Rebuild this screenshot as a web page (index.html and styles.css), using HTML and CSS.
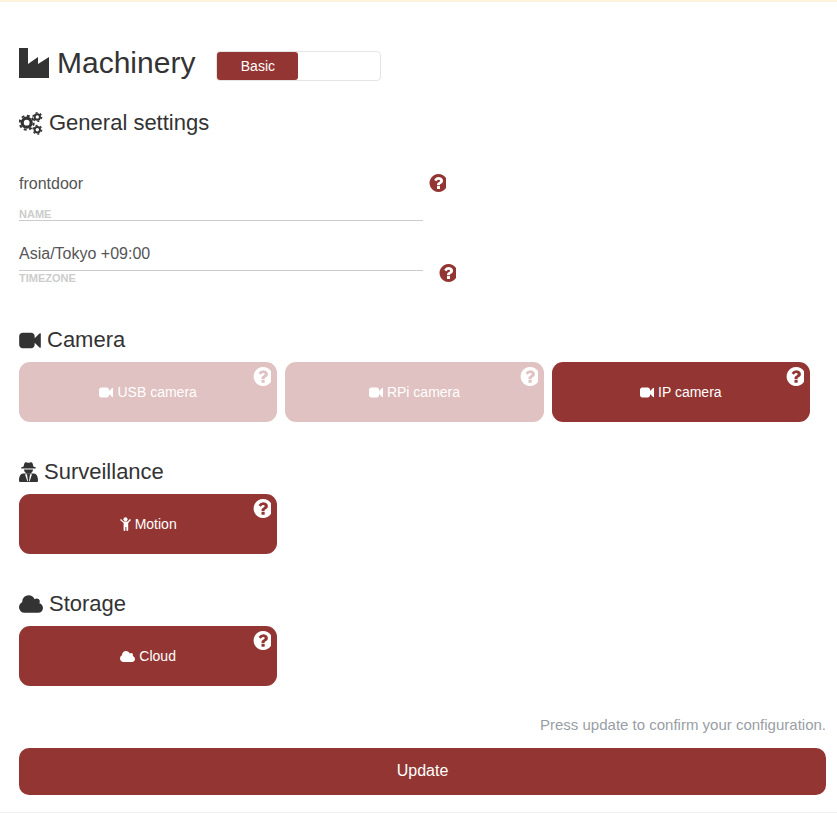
FILE: index.html
```html
<!DOCTYPE html>
<html lang="en">
<head>
    <meta charset="UTF-8">
    <meta name="viewport" content="width=device-width, initial-scale=1.0">
    <title>Machinery</title>
    <link rel="stylesheet" href="styles.css">
</head>
<body>
    <svg class="sprites" width="0" height="0" aria-hidden="true">
        <symbol id="i-help" viewBox="0 0 1536 1536">
            <path transform="translate(0 -128)" d="M1024 1376v-192q0-14-9-23t-23-9h-192q-14 0-23 9t-9 23v192q0 14 9 23t23 9h192q14 0 23-9t9-23zm256-672q0-88-55.5-163t-138.5-116-170-41q-243 0-371 213-15 24 8 42l132 100q7 6 19 6 16 0 25-12 53-68 86-92 34-24 86-24 48 0 85.5 26t37.5 59q0 38-20 61t-68 45q-63 28-115.5 86.5t-52.5 125.5v36q0 14 9 23t23 9h192q14 0 23-9t9-23q0-19 21.5-49.5t54.5-49.5q32-18 49-28.5t46-35 44.5-48 28-60.5 12.5-81zm384 192q0 209-103 385.5t-279.5 279.5-385.5 103-385.5-103-279.5-279.5-103-385.5 103-385.5 279.5-279.5 385.5-103 385.5 103 279.5 279.5 103 385.5z"/>
        </symbol>
        <symbol id="i-video" viewBox="0 192 1792 1408">
            <path d="M1792 352v1088q0 42-39 59-13 5-25 5-27 0-45-19l-403-403v166q0 119-84.5 203.5t-203.5 84.5h-704q-119 0-203.5-84.5t-84.5-203.5v-704q0-119 84.5-203.5t203.5-84.5h704q119 0 203.5 84.5t84.5 203.5v165l403-402q18-19 45-19 12 0 25 5 39 17 39 59z"/>
        </symbol>
        <symbol id="i-cloud" viewBox="0 128 1920 1408">
            <path d="M1920 1152q0 159-112.5 271.5t-271.5 112.5h-1088q-185 0-316.5-131.5t-131.5-316.5q0-132 71-241.5t187-163.5q-2-28-2-43 0-212 150-362t362-150q158 0 286.5 88t187.5 230q70-62 166-62 106 0 181 75t75 181q0 75-41 138 129 30 213 134.5t84 239.5z"/>
        </symbol>
        <symbol id="i-child" viewBox="0 0 11 14">
            <circle cx="5.500" cy="2.200" r="2"/>
            <path d="M0 3l1-1 2.500 2.500h4L10 2l1 1-2.800 3v7a.9.9 0 0 1-1.800 0V10h-1v3a.9.9 0 0 1-1.800 0V6z"/>
        </symbol>
        <symbol id="i-spy" viewBox="0 0 19 20">
            <path d="M6.500.3c.8 0 2 .5 3 .5s2.200-.5 3-.5c1 0 1.600 2.700 1.900 4.200l2.600 1-.5 1H2.500l-.5-1 2.600-1C4.900 3 5.500.3 6.500.3z"/>
            <path d="M5 7.500h9c0 2.400-2 4.300-4.500 4.300S5 9.900 5 7.500z"/>
            <path fill-rule="evenodd" d="M4 11.500h11c2.500 0 4 3.200 4 7 0 1-.5 1.500-1.500 1.500h-16C.5 20 0 19.500 0 18.500c0-3.800 1.500-7 4-7zM6 12.200l2.300 7h.7L8 12.200zM11 12.200l-1 7h.700l2.300-7h-2z"/>
        </symbol>
    </svg>

    <main class="page">
        <div class="title-row">
            <h1>
                <svg class="icon-factory" viewBox="0 0 30 30"><path d="M0 0h9v16l10-7v7l11-7v21H0z"/></svg>
                Machinery
            </h1>
            <div class="mode-toggle">
                <button class="mode-btn active">Basic</button>
            </div>
        </div>

        <h2 class="settings-title">
            <svg class="icon-cogs" viewBox="0 0 24 24">
                <g fill="none" stroke="#333">
                    <circle cx="7.700" cy="11.700" r="4.500" stroke-width="3.200"/>
                    <circle cx="7.700" cy="11.700" r="7" stroke-width="2" stroke-dasharray="2.900 2.600"/>
                    <circle cx="18.300" cy="6" r="2.700" stroke-width="2"/>
                    <circle cx="18.300" cy="6" r="4.300" stroke-width="1.400" stroke-dasharray="2 2.500"/>
                    <circle cx="18.300" cy="18.700" r="2.700" stroke-width="2"/>
                    <circle cx="18.300" cy="18.700" r="4.300" stroke-width="1.400" stroke-dasharray="2 2.500"/>
                </g>
            </svg>
            General settings
        </h2>

        <div class="field field-name">
            <div class="field-box">
                <input type="text" value="frontdoor">
                <label>NAME</label>
            </div>
            <svg class="help help-dark"><use href="#i-help"/></svg>
        </div>
        <div class="field field-tz">
            <div class="field-box">
                <input type="text" value="Asia/Tokyo +09:00">
                <label>TIMEZONE</label>
            </div>
            <svg class="help help-dark"><use href="#i-help"/></svg>
        </div>

        <h3 class="section-title section-camera">
            <svg class="icon-video"><use href="#i-video"/></svg>
            Camera
        </h3>
        <div class="cards">
            <div class="card off">
                <svg class="card-icon card-video"><use href="#i-video"/></svg> USB camera
                <svg class="help card-help"><use href="#i-help"/></svg>
            </div>
            <div class="card off">
                <svg class="card-icon card-video"><use href="#i-video"/></svg> RPi camera
                <svg class="help card-help"><use href="#i-help"/></svg>
            </div>
            <div class="card">
                <svg class="card-icon card-video"><use href="#i-video"/></svg> IP camera
                <svg class="help card-help"><use href="#i-help"/></svg>
            </div>
        </div>

        <h3 class="section-title">
            <svg class="icon-spy"><use href="#i-spy"/></svg>
            Surveillance
        </h3>
        <div class="cards">
            <div class="card">
                <svg class="card-icon card-child"><use href="#i-child"/></svg> Motion
                <svg class="help card-help"><use href="#i-help"/></svg>
            </div>
        </div>

        <h3 class="section-title">
            <svg class="icon-cloud"><use href="#i-cloud"/></svg>
            Storage
        </h3>
        <div class="cards">
            <div class="card">
                <svg class="card-icon card-cloud"><use href="#i-cloud"/></svg> Cloud
                <svg class="help card-help"><use href="#i-help"/></svg>
            </div>
        </div>

        <p class="note">Press update to confirm your configuration.</p>
        <button class="update-btn">Update</button>
    </main>
</body>
</html>
```

FILE: styles.css
```css
* {
    box-sizing: border-box;
}
body {
    margin: 0;
    height: 814px;
    overflow: hidden;
    font-family: "Liberation Sans", Arial, sans-serif;
    color: #333;
    background: #fff;
    border-top: 2px solid #fdf3dc;
}
svg {
    fill: currentColor;
}
.sprites {
    position: absolute;
}
.page {
    height: 811px;
    padding: 46px 11px 0 19px;
    border-bottom: 1px solid #f0f0f0;
}
.title-row {
    display: flex;
    align-items: flex-start;
    height: 30px;
}
h1 {
    display: flex;
    align-items: center;
    gap: 8px;
    margin: 0;
    font-size: 30px;
    font-weight: 400;
    line-height: 30px;
}
.icon-factory {
    width: 30px;
    height: 30px;
}
.mode-toggle {
    width: 165px;
    height: 30px;
    margin: 3px 0 0 21px;
    border: 1px solid #e5e5e5;
    border-radius: 4px;
}
.mode-btn {
    display: block;
    width: 81px;
    height: 28px;
    padding: 0;
    border: none;
    border-radius: 3px;
    background: #933633;
    color: #fff;
    font: 14px "Liberation Sans", Arial, sans-serif;
}
.settings-title {
    display: flex;
    align-items: center;
    gap: 6px;
    margin: 30px 0 0;
    height: 30px;
    font-size: 22px;
    font-weight: 400;
}
.icon-cogs {
    width: 24px;
    height: 24px;
}
.field {
    display: flex;
    align-items: flex-start;
}
.field-box {
    width: 404px;
    position: relative;
}
.field-box input {
    display: block;
    width: 100%;
    padding: 0;
    border: none;
    outline: none;
    color: #555;
    font: 16px "Liberation Sans", Arial, sans-serif;
    background: transparent;
}
.field-box label {
    display: block;
    color: #ccc;
    font-size: 11px;
    font-weight: 700;
    line-height: 12px;
}
.field-name {
    margin-top: 34px;
}
.field-name input {
    height: 24px;
}
.field-name .field-box {
    height: 49px;
    border-bottom: 1px solid #ccc;
}
.field-name label {
    margin-top: 12px;
}
.field-name .help {
    margin: 2px 0 0 5px;
}
.field-tz {
    margin-top: 17px;
}
.field-tz input {
    height: 33px;
    border-bottom: 1px solid #ccc;
}
.field-tz label {
    margin: 1px 0 1px;
}
.field-tz .help {
    margin: 26px 0 0 15px;
}
.help {
    width: 18px;
    height: 18px;
    flex: none;
}
.help-dark {
    color: #933633;
}
.section-title {
    display: flex;
    align-items: center;
    gap: 6px;
    height: 26px;
    margin: 37px 0 0;
    font-size: 22px;
    font-weight: 400;
}
.section-camera {
    margin-top: 42px;
}
.icon-video {
    width: 22px;
    height: 17px;
}
.icon-spy {
    width: 19px;
    height: 20px;
}
.icon-cloud {
    width: 24px;
    height: 18px;
}
.cards {
    display: grid;
    grid-template-columns: repeat(3, 1fr);
    gap: 8px;
    width: 791px;
    margin-top: 9px;
}
.card {
    position: relative;
    display: flex;
    align-items: center;
    justify-content: center;
    gap: 4px;
    height: 60px;
    border-radius: 11px;
    background: #933633;
    color: #fff;
    font-size: 14px;
}
.card.off {
    background: #dfc2c1;
}
.card-icon {
    flex: none;
}
.card-video {
    width: 14px;
    height: 11px;
}
.card-child {
    width: 11px;
    height: 14px;
}
.card-cloud {
    width: 15px;
    height: 11px;
}
.card-help {
    position: absolute;
    top: 5px;
    right: 6px;
    width: 19px;
    height: 19px;
}
.note {
    margin: 29px 0 0;
    text-align: right;
    color: #999ea6;
    font-size: 15px;
    line-height: 20px;
}
.update-btn {
    display: block;
    width: 100%;
    height: 47px;
    margin-top: 13px;
    padding: 0 0 2px;
    border: none;
    border-radius: 10px;
    background: #933633;
    color: #fff;
    font: 16px "Liberation Sans", Arial, sans-serif;
}
```
